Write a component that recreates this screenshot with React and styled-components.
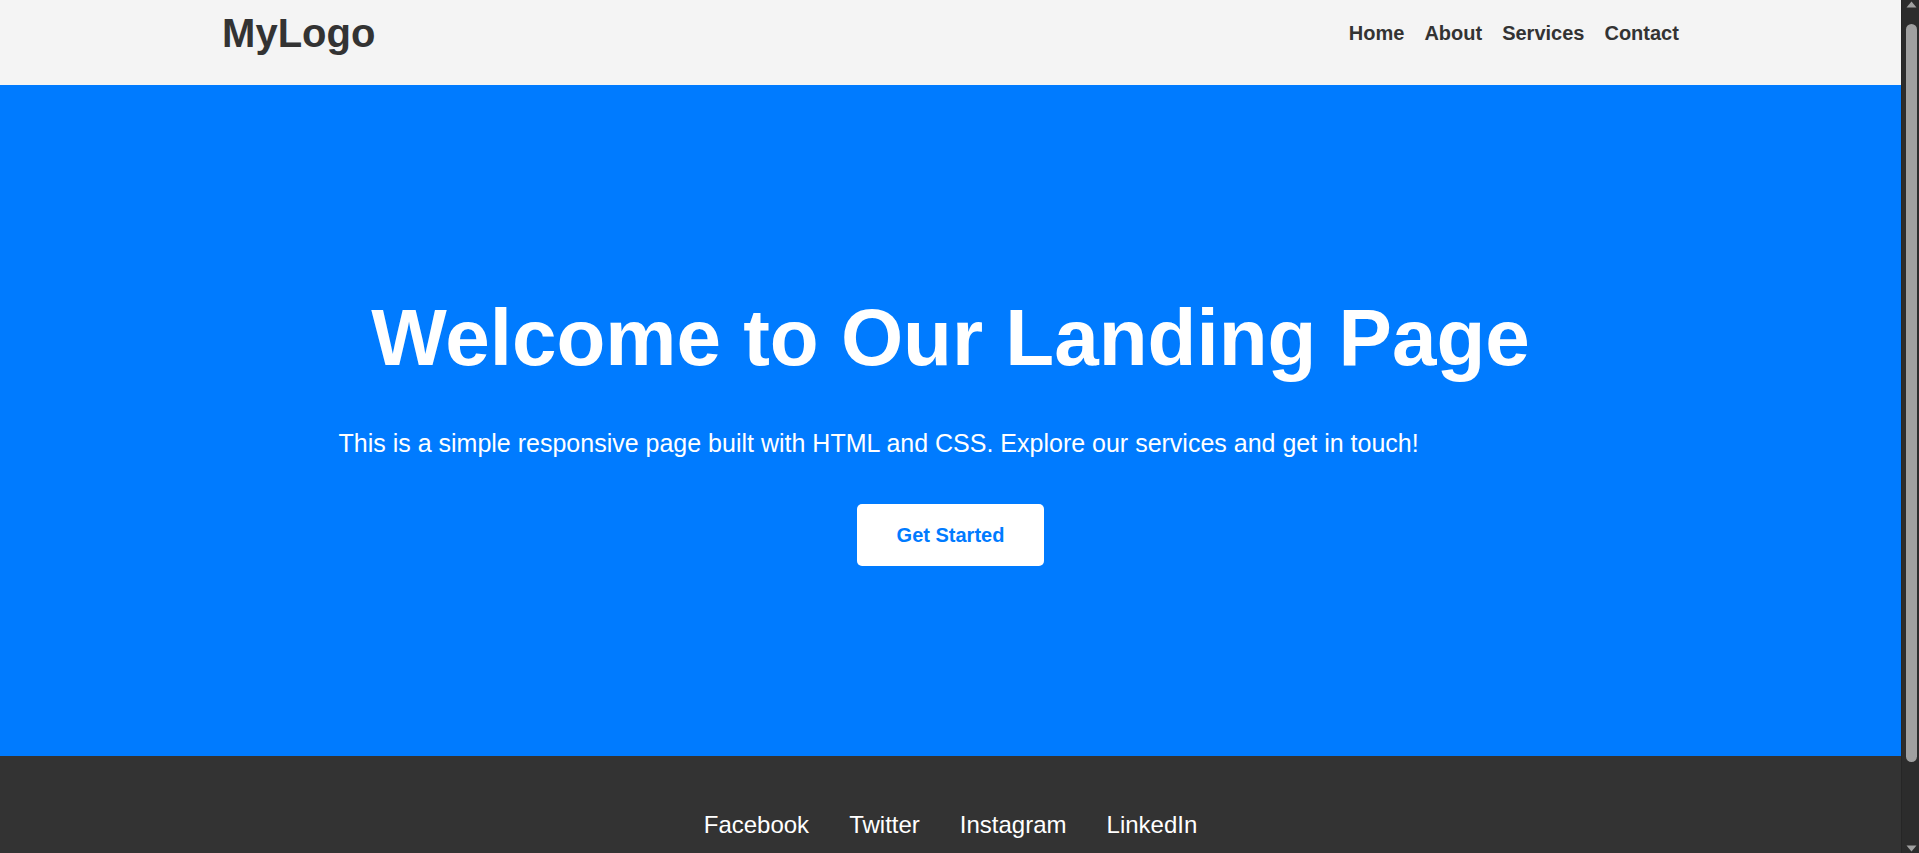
import React from "react";
import styled, { createGlobalStyle } from "styled-components";

const GlobalStyle = createGlobalStyle`
  html, body {
    margin: 0;
    padding: 0;
  }
  body {
    font-family: "Liberation Sans", Arial, Helvetica, sans-serif;
    background: #ffffff;
    color: #333333;
  }
  * {
    box-sizing: border-box;
  }
`;

const Page = styled.div`
  margin-right: 18px;
`;

const Header = styled.header`
  background: #f4f4f4;
  height: 85px;
  padding-top: 10px;
`;

const HeaderInner = styled.div`
  width: 80%;
  margin: 0 auto;
  padding: 0 32px;
  height: 46px;
  display: flex;
  align-items: center;
  justify-content: space-between;
`;

const Logo = styled.div`
  font-size: 40px;
  font-weight: 700;
  color: #333333;
  line-height: normal;
`;

const NavList = styled.ul`
  list-style: none;
  margin: 0;
  padding: 0;
  display: flex;
  gap: 20px;
`;

const NavLink = styled.a`
  font-size: 20px;
  font-weight: 700;
  color: #333333;
  text-decoration: none;
`;

const Hero = styled.section`
  background: #007bff;
  color: #ffffff;
  height: 671px;
  padding-top: 207px;
  display: flex;
  flex-direction: column;
  align-items: center;
`;

const Title = styled.h1`
  margin: 0 0 45px;
  font-size: 80px;
  font-weight: 700;
  line-height: normal;
  text-align: center;
`;

const Lead = styled.p`
  margin: 0 0 46px;
  width: 100%;
  max-width: 1224px;
  font-size: 25px;
  line-height: normal;
  text-align: left;
`;

const CtaButton = styled.a`
  display: inline-block;
  background: #ffffff;
  color: #007bff;
  font-size: 20px;
  font-weight: 700;
  line-height: 22px;
  padding: 20px 40px;
  border-radius: 5px;
  text-decoration: none;
`;

const Footer = styled.footer`
  background: #333333;
  color: #ffffff;
  min-height: 190px;
  padding: 55px 0;
`;

const SocialList = styled.ul`
  list-style: none;
  margin: 0;
  padding: 0;
  display: flex;
  justify-content: center;
  gap: 40px;
`;

const SocialLink = styled.a`
  font-size: 24px;
  color: #ffffff;
  text-decoration: none;
  line-height: normal;
`;

/* Browser scrollbar, drawn over the right edge of the window */
const ScrollTrack = styled.div`
  position: fixed;
  top: 0;
  right: 0;
  width: 18px;
  height: 100vh;
  background: #2c2c2c;
  border-left: 1px solid #262626;
  display: flex;
  flex-direction: column;
  align-items: center;
  padding: 1px 0 1px 1px;
`;

const ScrollArrow = styled.svg`
  display: block;
  width: 11px;
  height: 7px;
  flex: none;
`;

const ScrollThumb = styled.div`
  width: 11px;
  height: 738px;
  margin-top: 16px;
  border-radius: 6px;
  background: #a0a0a0;
  flex: none;
`;

const ScrollSpacer = styled.div`
  flex: 1;
`;

const navItems = ["Home", "About", "Services", "Contact"];
const socialItems = ["Facebook", "Twitter", "Instagram", "LinkedIn"];

export default function App() {
  return (
    <>
      <GlobalStyle />
      <Page>
        <Header>
          <HeaderInner>
            <Logo>MyLogo</Logo>
            <nav>
              <NavList>
                {navItems.map((item) => (
                  <li key={item}>
                    <NavLink href="#">{item}</NavLink>
                  </li>
                ))}
              </NavList>
            </nav>
          </HeaderInner>
        </Header>
        <Hero>
          <Title>Welcome to Our Landing Page</Title>
          <Lead>
            This is a simple responsive page built with HTML and CSS. Explore
            our services and get in touch!
          </Lead>
          <CtaButton href="#">Get Started</CtaButton>
        </Hero>
        <Footer>
          <SocialList>
            {socialItems.map((item) => (
              <li key={item}>
                <SocialLink href="#">{item}</SocialLink>
              </li>
            ))}
          </SocialList>
        </Footer>
      </Page>
      <ScrollTrack aria-hidden="true">
        <ScrollArrow viewBox="0 0 11 7">
          <path d="M5.5 0.5 L10.5 6.5 L0.5 6.5 Z" fill="#a0a0a0" />
        </ScrollArrow>
        <ScrollThumb />
        <ScrollSpacer />
        <ScrollArrow viewBox="0 0 11 7">
          <path d="M0.5 0.5 L10.5 0.5 L5.5 6.5 Z" fill="#a0a0a0" />
        </ScrollArrow>
      </ScrollTrack>
    </>
  );
}
